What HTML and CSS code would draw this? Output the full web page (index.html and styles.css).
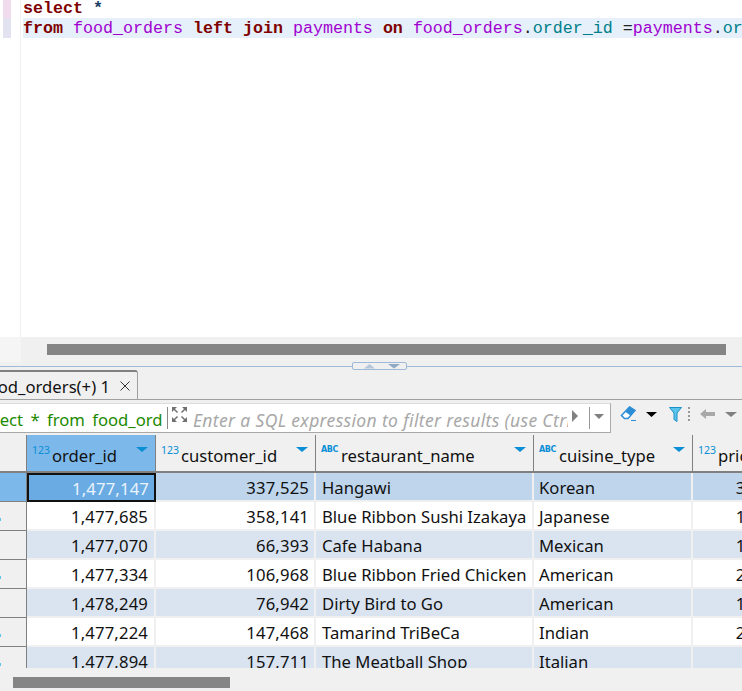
FILE: index.html
```html
<!DOCTYPE html>
<html lang="en">
<head>
<meta charset="utf-8">
<title>SQL editor</title>
<link rel="stylesheet" href="styles.css">
</head>
<body>
<div class="app">
  <section class="editor">
    <div class="gutter">
      <div class="mark mark-a"></div>
      <div class="mark mark-b"></div>
    </div>
    <div class="code">
      <div class="line"><span class="kw">select</span> <span class="star">*</span></div>
      <div class="line current"><span class="kw">from</span> <span class="tb">food_orders</span> <span class="kw">left</span> <span class="kw">join</span> <span class="tb">payments</span> <span class="kw">on</span> <span class="tb">food_orders</span><span class="pl">.</span><span class="col">order_id</span> <span class="pl">=</span><span class="tb">payments</span><span class="pl">.</span><span class="col">order_id</span></div>
    </div>
  </section>
  <div class="editor-scroll">
    <div class="editor-scroll-corner"></div>
    <div class="editor-thumb"></div>
  </div>
  <div class="sash">
    <div class="sash-handle">
      <svg width="42" height="6" viewBox="0 0 42 6"><path d="M5 5.500 10.500 1 16 5.500Z" fill="#b4c6d8"/><path d="M29 1H41L35 5.500Z" fill="#8fa9c4"/></svg>
    </div>
  </div>
  <div class="tabs">
    <div class="tab">
      <span class="tab-label">food_orders(+) 1</span>
      <svg class="tab-close" width="10" height="10" viewBox="0 0 10 10"><path d="M.5.500 9.500 9.500M9.500.500.500 9.500" stroke="#333" stroke-width="1" fill="none"/></svg>
    </div>
  </div>
  <div class="filterbar">
    <div class="filter-box">
      <div class="query-box"><span class="query-text">select * from food_orders</span></div>
      <span class="query-sep"></span>
      <svg class="expand" width="15" height="15" viewBox="0 0 15 15"><g fill="none" stroke="#707070" stroke-width="1.500"><path d="M1.500 1.500 5.500 5.500M13.500 1.500 9.500 5.500M1.500 13.500 5.500 9.500M13.500 13.500 9.500 9.500"/></g><g fill="#707070"><path d="M0 0H5L0 5Z"/><path d="M15 0V5L10 0Z"/><path d="M0 15V10L5 15Z"/><path d="M15 15H10L15 10Z"/></g></svg>
      <span class="placeholder">Enter a SQL expression to filter results (use Ctrl+Space)</span>
      <svg class="play" width="6" height="12" viewBox="0 0 6 12"><path d="M0 0 6 6 0 12Z" fill="#808080"/></svg>
      <span class="box-sep"></span>
      <svg class="drop" width="10" height="5" viewBox="0 0 10 5"><path d="M0 0H10L5 5Z" fill="#808080"/></svg>
    </div>
    <div class="tools">
      <svg class="t-eraser" width="17" height="16" viewBox="0 0 17 16"><path d="M9.500 1 15 4.500 8 12.500H4.500L1.500 9.500Z" fill="#fff" stroke="#2c8ed6" stroke-width="1.500"/><path d="M9.500 1 15 4.500 10.500 9.500 5.500 6Z" fill="#2c8ed6"/><path d="M11 14.500H16" stroke="#2c8ed6"/></svg>
      <svg class="t-down" width="11" height="5" viewBox="0 0 11 5"><path d="M0 0H11L5.500 5Z" fill="#000"/></svg>
      <svg class="t-funnel" width="13" height="15" viewBox="0 0 13 15"><path d="M.5.500H12.500L8 6V14.500L5 12.500V6Z" fill="#5cc4ea" stroke="#1b8fc9"/></svg>
      <span class="t-dots"></span>
      <svg class="t-back" width="15" height="10" viewBox="0 0 15 10"><path d="M0 5 6 0V3H15V7H6V10Z" fill="#a8a8a8"/></svg>
      <svg class="t-drop" width="12" height="5" viewBox="0 0 12 5"><path d="M0 0H12L6 5Z" fill="#808080"/></svg>
    </div>
  </div>
  <div class="grid">
    <div class="hcell hcorner"></div>
    <div class="hcell hactive"><span class="type">123</span><span class="name">order_id</span><span class="sort"></span></div>
    <div class="hcell"><span class="type">123</span><span class="name">customer_id</span><span class="sort"></span></div>
    <div class="hcell"><span class="type abc">ABC</span><span class="name">restaurant_name</span><span class="sort"></span></div>
    <div class="hcell"><span class="type abc">ABC</span><span class="name">cuisine_type</span><span class="sort"></span></div>
    <div class="hcell"><span class="type">123</span><span class="name">price</span></div>

    <div class="rh rh-active"></div>
    <div class="c n oid sel cursor">1,477,147</div><div class="c n sel">337,525</div><div class="c sel">Hangawi</div><div class="c cu sel">Korean</div><div class="c n sel">30.75</div>

    <div class="rh"><span class="rn"></span></div>
    <div class="c n oid">1,477,685</div><div class="c n">358,141</div><div class="c">Blue Ribbon Sushi Izakaya</div><div class="c cu">Japanese</div><div class="c n">12.08</div>

    <div class="rh"></div>
    <div class="c n oid alt">1,477,070</div><div class="c n alt">66,393</div><div class="c alt">Cafe Habana</div><div class="c cu alt">Mexican</div><div class="c n alt">12.23</div>

    <div class="rh"><span class="rn"></span></div>
    <div class="c n oid">1,477,334</div><div class="c n">106,968</div><div class="c">Blue Ribbon Fried Chicken</div><div class="c cu">American</div><div class="c n">29.20</div>

    <div class="rh"></div>
    <div class="c n oid alt">1,478,249</div><div class="c n alt">76,942</div><div class="c alt">Dirty Bird to Go</div><div class="c cu alt">American</div><div class="c n alt">11.59</div>

    <div class="rh"><span class="rn"></span></div>
    <div class="c n oid">1,477,224</div><div class="c n">147,468</div><div class="c">Tamarind TriBeCa</div><div class="c cu">Indian</div><div class="c n">25.22</div>

    <div class="rh"><span class="rn"></span></div>
    <div class="c n oid alt">1,477,894</div><div class="c n alt">157,711</div><div class="c alt">The Meatball Shop</div><div class="c cu alt">Italian</div><div class="c n alt">6.07</div>
  </div>
  <div class="grid-scroll"><div class="grid-thumb"></div></div>
</div>
</body>
</html>
```
FILE: styles.css
```css
* { box-sizing: border-box; }
html, body { margin: 0; height: 100%; overflow: hidden; }
body { background: #f0f0f0; font-family: "Noto Sans", sans-serif; font-size: 16.67px; color: #111; }
.app { width: 742px; height: 691px; display: flex; flex-direction: column; overflow: hidden; }

/* editor */
.editor { height: 337px; flex: none; background: #fff; display: flex; overflow: hidden; }
.gutter { width: 21px; flex: none; border-right: 1px solid #f0f0f0; padding-left: 3px; }
.mark { width: 8px; }
.mark-a { height: 18px; background: #f0dcec; }
.mark-b { height: 20px; background: #e2e2f0; }
.code { flex: 1; min-width: 0; padding-left: 2px; font: 16.67px/20px "Liberation Mono", monospace; }
.line { height: 18px; line-height: 18px; white-space: nowrap; overflow: hidden; }
.line.current { height: 20px; line-height: 21px; background: #e6f0fb; }
.kw { color: #7f0000; font-weight: 700; }
.tb { color: #a000d0; }
.col { color: #007f8a; }
.pl { color: #222; }
.star { color: #1b3f66; font-weight: 700; }

.editor-scroll { height: 29px; flex: none; display: flex; align-items: flex-start; }
.editor-scroll-corner { width: 21px; height: 25px; background: #f5f5f5; margin-right: 26px; }
.editor-thumb { width: 679px; height: 11px; margin-top: 7px; background: #858585; }

/* sash */
.sash { height: 1px; flex: none; background: #9dbbd8; position: relative; }
.sash-handle { position: absolute; left: 352px; top: -4px; width: 55px; height: 8px; background: #f0f0f0; border: 1px solid #9dbbd8; border-radius: 2px; display: flex; align-items: center; justify-content: center; overflow: hidden; }

/* tabs */
.tabs { height: 33px; flex: none; padding-top: 3px; border-bottom: 1px solid #a0a0a0; display: flex; overflow: hidden; }
.tab { width: 138px; height: 30px; background: #f0f0f0; border-top: 2px solid #808080; border-right: 1px solid #a0a0a0; border-top-right-radius: 3px; display: flex; align-items: center; justify-content: flex-end; padding-right: 7px; gap: 10px; white-space: nowrap; }
.tab-close { flex: none; }

/* filter bar */
.filterbar { height: 35px; flex: none; display: flex; align-items: flex-start; overflow: hidden; }
.filter-box { width: 611px; height: 30px; flex: none; margin-top: 3px; background: #fff; border-style: solid; border-width: 1px 1px 1px 0; border-color: #dcdcdc #a9a9a9 #a9a9a9; display: flex; align-items: center; overflow: hidden; }
.query-box { width: 163px; flex: none; overflow: hidden; white-space: nowrap; line-height: 28px; padding-top: 3px; color: #1c8a00; }
.query-text { display: block; margin-left: -22px; word-spacing: 3px; }
.query-sep { flex: none; width: 1px; height: 22px; margin-left: 4px; background: #888; }
.expand { flex: none; margin: -7px 0 0 4px; }
.placeholder { width: 375px; flex: none; margin: 3px 0 0 6px; overflow: hidden; white-space: nowrap; font-style: italic; font-size: 17.5px; color: #a8a8a8; letter-spacing: .35px; }
.play { flex: none; margin: -5px 0 0 4px; }
.box-sep { flex: none; width: 1px; height: 22px; background: #999; margin-left: 11px; }
.drop { flex: none; margin: -4px 0 0 4px; }
.tools { display: flex; align-items: center; height: 14px; margin-top: 7px; padding-left: 9px; }
.t-eraser { flex: none; }
.t-down { flex: none; margin-left: 9px; }
.t-funnel { flex: none; margin-left: 12px; }
.t-dots { flex: none; width: 2px; height: 14px; margin-left: 6px; background: repeating-linear-gradient(#999 0 2px, transparent 2px 4px); }
.t-back { flex: none; margin-left: 10px; }
.t-drop { flex: none; margin-left: 10px; }

/* grid */
.grid { flex: 1; min-height: 0; width: 786px; display: grid; grid-template-columns: 27px 129px 160px 218px 159px 93px; grid-template-rows: 38px repeat(7, 29px); overflow: hidden; }
.hcell { position: relative; background: #f0f0f0; border-right: 1px solid #808080; border-bottom: 2px solid #808080; padding-left: 25px; white-space: nowrap; overflow: hidden; line-height: 41px; }
.hcorner { padding: 0; }
.hactive { background: #7db8eb; }
.hcell:nth-child(6) { border-right: 0; }
.type { position: absolute; left: 5px; top: 9px; font-size: 10.500px; line-height: 12px; color: #0a8fd6; }
.type.abc { font-size: 8px; font-weight: 700; font-family: "DejaVu Sans", sans-serif; letter-spacing: -.4px; }
.sort { position: absolute; right: 7px; top: 12px; width: 0; height: 0; border-left: 6px solid transparent; border-right: 6px solid transparent; border-top: 5px solid #0a8fd6; }
.rh { background: #f0f0f0; border-right: 1px solid #808080; border-bottom: 1px solid #808080; display: flex; align-items: center; }
.rh-active { background: #7db8eb; }
.rn { width: 1px; height: 3px; margin-top: 7px; background: #5cc4ea; }
.c { padding: 0 6px; line-height: 30px; white-space: nowrap; overflow: hidden; background: #fff; border-right: 2px solid #f0f0f0; border-bottom: 2px solid #f0f0f0; }
.c.n { text-align: right; padding-right: 5px; letter-spacing: .15px; }
.c.oid { padding-right: 6px; }
.c.cu { padding-left: 5px; }
.c.alt { background: #dae4f0; }
.c.sel { background: #bed5ec; }
.c.cursor { background: #6aabe3; color: #eaf4fc; border: 2px solid #111; line-height: 27px; padding-right: 5px; }

/* bottom scrollbar */
.grid-scroll { height: 23px; flex: none; padding: 9px 0 3px 13px; background: #f0f0f0; }
.grid-thumb { width: 217px; height: 11px; background: #858585; }
```
